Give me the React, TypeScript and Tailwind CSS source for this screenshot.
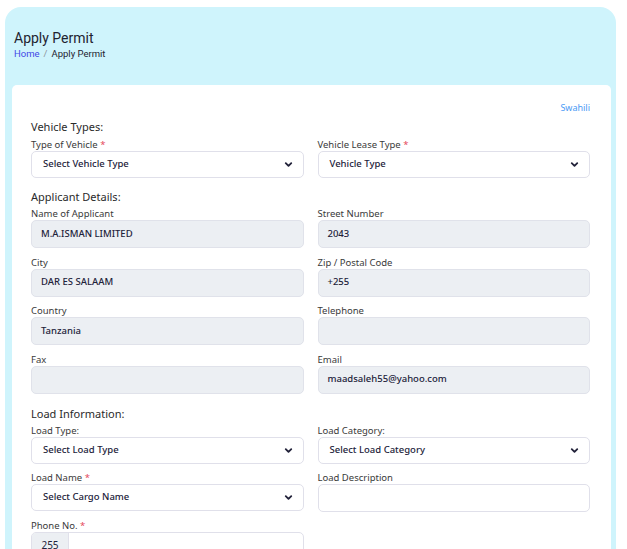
import React from 'react';
import {ChevronDown} from 'lucide-react';

const applicant = [
  {label: 'Name of Applicant', value: 'M.A.ISMAN LIMITED'},
  {label: 'Street Number', value: '2043'},
  {label: 'City', value: 'DAR ES SALAAM'},
  {label: 'Zip / Postal Code', value: '+255'},
  {label: 'Country', value: 'Tanzania'},
  {label: 'Telephone', value: ''},
  {label: 'Fax', value: ''},
  {label: 'Email', value: 'maadsaleh55@yahoo.com'},
];

function Label({text, required}: {text: string; required?: boolean}) {
  return (
    <div className="text-[9.5px] leading-[13px] text-[#3a3a3a]">
      {text}
      {required && <span className="text-[#e4475a]"> *</span>}
    </div>
  );
}

function Select({text}: {text: string}) {
  return (
    <div className="h-[27px] rounded-[5px] border border-[#e0e0ea] bg-white flex items-center justify-between pl-[11px] pr-[9px] text-[9.5px] font-medium text-[#22223a]">
      <span>{text}</span>
      <ChevronDown className="w-[11px] h-[11px] text-[#22223a]" strokeWidth={4} />
    </div>
  );
}

function ReadOnly({value}: {value: string}) {
  return (
    <div className="h-[28px] rounded-[5px] border border-[#e0e2ea] bg-[#eceff3] flex items-center pl-[9px] text-[9.5px] font-medium text-[#22223a]">
      {value}
    </div>
  );
}

function Heading({text, className}: {text: string; className?: string}) {
  return <div className={`text-[11px] leading-[14px] text-[#2a2a2a] ${className ?? ''}`}>{text}</div>;
}

export default function App() {
  return (
    <div className="h-[549px] bg-white pt-[7px] overflow-hidden" style={{fontFamily: '"Noto Sans", "Open Sans", sans-serif'}}>
      <div className="ml-[5px] w-[611px] rounded-t-[16px] bg-[#cff4fc] pb-[40px]">
        <div className="pl-[9px] pt-[22px] pb-[14px]" style={{fontFamily: 'Roboto, sans-serif'}}>
          <h1 className="text-[14px] leading-[18px] text-[#1e2330]">Apply Permit</h1>
          <div className="flex items-center gap-[4px] text-[9.5px] leading-[14px]">
            <span className="text-[#3f47e6]">Home</span>
            <span className="text-[#8a8f98]">/</span>
            <span className="text-[#1e2330]">Apply Permit</span>
          </div>
        </div>

        <div className="ml-[7px] mr-[5px] mt-[10px] bg-white rounded-t-[5px] pl-[19px] pr-[21px] pt-[17px] pb-[20px]">
          <div className="flex justify-end">
            <span className="text-[9px] leading-[12px] text-[#4a9af5]">Swahili</span>
          </div>

          <Heading text="Vehicle Types:" className="mt-[6px]" />
          <div className="grid grid-cols-2 gap-x-[14px] mt-[4px]">
            <div>
              <Label text="Type of Vehicle" required />
              <Select text="Select Vehicle Type" />
            </div>
            <div>
              <Label text="Vehicle Lease Type" required />
              <Select text="Vehicle Type" />
            </div>
          </div>

          <Heading text="Applicant Details:" className="mt-[12px]" />
          <div className="grid grid-cols-2 gap-x-[14px] gap-y-[7.5px] mt-[3px]">
            {applicant.map((f) => (
              <div key={f.label}>
                <Label text={f.label} />
                <ReadOnly value={f.value} />
              </div>
            ))}
          </div>

          <Heading text="Load Information:" className="mt-[13px]" />
          <div className="grid grid-cols-2 gap-x-[14px] gap-y-[7px] mt-[3px]">
            <div>
              <Label text="Load Type:" />
              <Select text="Select Load Type" />
            </div>
            <div>
              <Label text="Load Category:" />
              <Select text="Select Load Category" />
            </div>
            <div>
              <Label text="Load Name" required />
              <Select text="Select Cargo Name" />
            </div>
            <div>
              <Label text="Load Description" />
              <div className="h-[28px] rounded-[5px] border border-[#e0e0ea] bg-white" />
            </div>
            <div>
              <Label text="Phone No." required />
              <div className="h-[28px] flex rounded-[5px] border border-[#e0e0ea] bg-white overflow-hidden">
                <div className="w-[37px] bg-[#eceff3] border-r border-[#e0e0ea] flex items-center justify-center text-[10px] text-[#22223a]">
                  255
                </div>
                <div className="flex-1" />
              </div>
            </div>
          </div>
        </div>
      </div>
    </div>
  );
}
